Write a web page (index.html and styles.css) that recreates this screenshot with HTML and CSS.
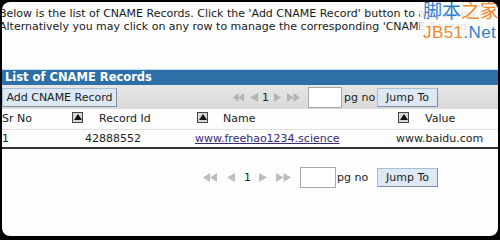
FILE: index.html
```html
<!DOCTYPE html>
<html lang="en">
<head>
    <meta charset="UTF-8">
    <title>CNAME Records</title>
    <link rel="stylesheet" href="styles.css">
</head>
<body>
    <div class="frame">
        <!-- Intro text -->
        <p class="intro">Below is the list of CNAME Records. Click the 'Add CNAME Record' button to add a new record.<br>Alternatively you may click on any row to manage the corresponding 'CNAME Record'.</p>

        <!-- Site watermark -->
        <div class="watermark">
            <div class="wm-top"><span class="wm-blue">脚本</span><span class="wm-orange">之家</span></div>
            <div class="wm-bottom"><span class="wm-orange">JB51</span><span class="wm-blue">.Net</span></div>
        </div>

        <div class="grid">
            <div class="caption">List of CNAME Records</div>

            <div class="toolbar">
                <button class="btn add-btn">Add CNAME Record</button>
                <div class="pager top-pager">
                    <svg class="pg-icon first" viewBox="0 0 14 9" preserveAspectRatio="none"><path d="M7 0L0 4.5L7 9ZM14 0L7 4.5L14 9Z"/></svg>
                    <svg class="pg-icon prev" viewBox="0 0 8 9" preserveAspectRatio="none"><path d="M8 0L0 4.5L8 9Z"/></svg>
                    <span class="pg-num">1</span>
                    <svg class="pg-icon next" viewBox="0 0 8 9" preserveAspectRatio="none"><path d="M0 0L8 4.5L0 9Z"/></svg>
                    <svg class="pg-icon last" viewBox="0 0 14 9" preserveAspectRatio="none"><path d="M0 0L7 4.5L0 9ZM7 0L14 4.5L7 9Z"/></svg>
                    <input type="text" class="pg-input">
                    <span class="pg-label">pg no</span>
                    <button class="btn jump-btn">Jump To</button>
                </div>
            </div>

            <table class="records">
                <thead>
                    <tr>
                        <th class="col-sr">Sr No</th>
                        <th class="col-id"><span class="sort"></span><span class="th-text id-text">Record Id</span></th>
                        <th class="col-name"><span class="sort"></span><span class="th-text name-text">Name</span></th>
                        <th class="col-value"><span class="sort"></span><span class="th-text value-text">Value</span></th>
                    </tr>
                </thead>
                <tbody>
                    <tr>
                        <td class="col-sr">1</td>
                        <td class="col-id id-cell">42888552</td>
                        <td class="col-name"><a href="#">www.freehao1234.science</a></td>
                        <td class="col-value">www.baidu.com</td>
                    </tr>
                </tbody>
            </table>
        </div>

        <div class="pager bottom-pager">
            <svg class="pg-icon first" viewBox="0 0 14 9" preserveAspectRatio="none"><path d="M7 0L0 4.5L7 9ZM14 0L7 4.5L14 9Z"/></svg>
            <svg class="pg-icon prev" viewBox="0 0 8 9" preserveAspectRatio="none"><path d="M8 0L0 4.5L8 9Z"/></svg>
            <span class="pg-num">1</span>
            <svg class="pg-icon next" viewBox="0 0 8 9" preserveAspectRatio="none"><path d="M0 0L8 4.5L0 9Z"/></svg>
            <svg class="pg-icon last" viewBox="0 0 14 9" preserveAspectRatio="none"><path d="M0 0L7 4.5L0 9ZM7 0L14 4.5L7 9Z"/></svg>
            <input type="text" class="pg-input">
            <span class="pg-label">pg no</span>
            <button class="btn jump-btn">Jump To</button>
        </div>
    </div>
</body>
</html>
```

FILE: styles.css
```css
* {
    margin: 0;
    padding: 0;
    box-sizing: border-box;
}

body {
    background: #000;
    width: 500px;
    height: 240px;
    padding: 2px 2px 4px 2px;
    font-family: "DejaVu Sans", Verdana, sans-serif;
    font-size: 11px;
    color: #222;
}

.frame {
    position: relative;
    background: #fdfdfd;
    height: 100%;
    border-radius: 8px;
    overflow: hidden;
}

.intro {
    margin-left: -3px;
    padding-top: 5px;
    line-height: 13px;
    white-space: nowrap;
    font-size: 11px;
    color: #1a1a1a;
}

/* watermark sits over the intro text */
.watermark {
    position: absolute;
    top: -2px;
    right: -4px;
    width: 82px;
    padding-left: 3px;
    background: rgba(253, 253, 253, 0.88);
    line-height: 20px;
}

.wm-top {
    font-family: "Noto Sans CJK SC", sans-serif;
    font-size: 19px;
    height: 23px;
}

.wm-bottom {
    font-family: "Liberation Sans", Arial, sans-serif;
    font-size: 17px;
    letter-spacing: 0.4px;
    height: 20px;
}

.wm-blue {
    color: #2f7fc8;
}

.wm-orange {
    color: #f0892a;
}

.grid {
    margin-top: 36px;
}

.caption {
    background: #2d70a8;
    border-top: 1px solid #bfe3f0;
    color: #fff;
    font-weight: bold;
    font-size: 11.5px;
    height: 16px;
    line-height: 15px;
    padding-left: 3px;
}

.toolbar {
    display: flex;
    align-items: center;
    height: 24px;
    background: linear-gradient(#e6e6e6, #d9d9d9);
}

.btn {
    font-family: "DejaVu Sans", Verdana, sans-serif;
    font-size: 11px;
    color: #1a1a1a;
    background: #dce9f5;
    border: 1px solid #a9bfd6;
    border-right-color: #7d8fa3;
    border-bottom-color: #7d8fa3;
    height: 19px;
    line-height: 17px;
}

.add-btn {
    width: 115px;
}

.pager {
    display: flex;
    align-items: center;
}

.pg-icon {
    display: block;
    height: 9px;
    fill: #b4b4b4;
}

.pg-num {
    color: #222;
}

.pg-input {
    height: 21px;
    border: 1px solid #a6a6a6;
    background: #fff;
}

.pg-label {
    display: inline-block;
}

.jump-btn {
    width: 61px;
}

/* pager inside the toolbar */
.top-pager {
    margin-left: 116px;
}

.top-pager .first { width: 11px; }
.top-pager .prev { width: 8px; margin-left: 6px; }
.top-pager .pg-num { margin-left: 4px; width: 7px; }
.top-pager .next { width: 7px; margin-left: 5px; }
.top-pager .last { width: 13px; margin-left: 6px; }
.top-pager .pg-input { width: 34px; margin-left: 8px; }
.top-pager .pg-label { width: 33px; margin-left: 2px; }

/* pager under the table */
.bottom-pager {
    margin-top: 18px;
    margin-left: 201px;
}

.bottom-pager .pg-icon { fill: #bdbdbd; }
.bottom-pager .first { width: 14px; }
.bottom-pager .prev { width: 8px; margin-left: 10px; }
.bottom-pager .pg-num { margin-left: 9px; width: 7px; }
.bottom-pager .next { width: 8px; margin-left: 8px; }
.bottom-pager .last { width: 15px; margin-left: 9px; }
.bottom-pager .pg-input { width: 36px; margin-left: 9px; }
.bottom-pager .pg-label { width: 40px; margin-left: 1px; }

.records {
    width: 100%;
    border-collapse: collapse;
    table-layout: fixed;
    border-bottom: 2px solid #333;
}

.records th,
.records td {
    font-weight: normal;
    text-align: left;
    white-space: nowrap;
    height: 19px;
    vertical-align: middle;
}

.records th {
    border-bottom: 1px solid #e0e0e0;
    height: 20px;
}

.col-sr {
    width: 68px;
}

.col-id {
    width: 125px;
}

.col-name {
    width: 201px;
}

.id-cell {
    padding-left: 15px;
}

.sort {
    display: inline-block;
    width: 11px;
    height: 11px;
    border: 1px solid #444;
    background: #d8d8d8;
    position: relative;
    vertical-align: -1px;
}

.sort::after {
    content: "";
    position: absolute;
    left: 1px;
    top: 1px;
    border-left: 4px solid transparent;
    border-right: 4px solid transparent;
    border-bottom: 6px solid #111;
}

.col-id .sort {
    margin-left: 2px;
}

.id-text {
    margin-left: 16px;
}

.col-name .sort {
    margin-left: 2px;
}

.name-text {
    margin-left: 15px;
}

.col-value .sort {
    margin-left: 2px;
}

.value-text {
    margin-left: 16px;
}

.records a {
    color: #3a2a7a;
}
```
